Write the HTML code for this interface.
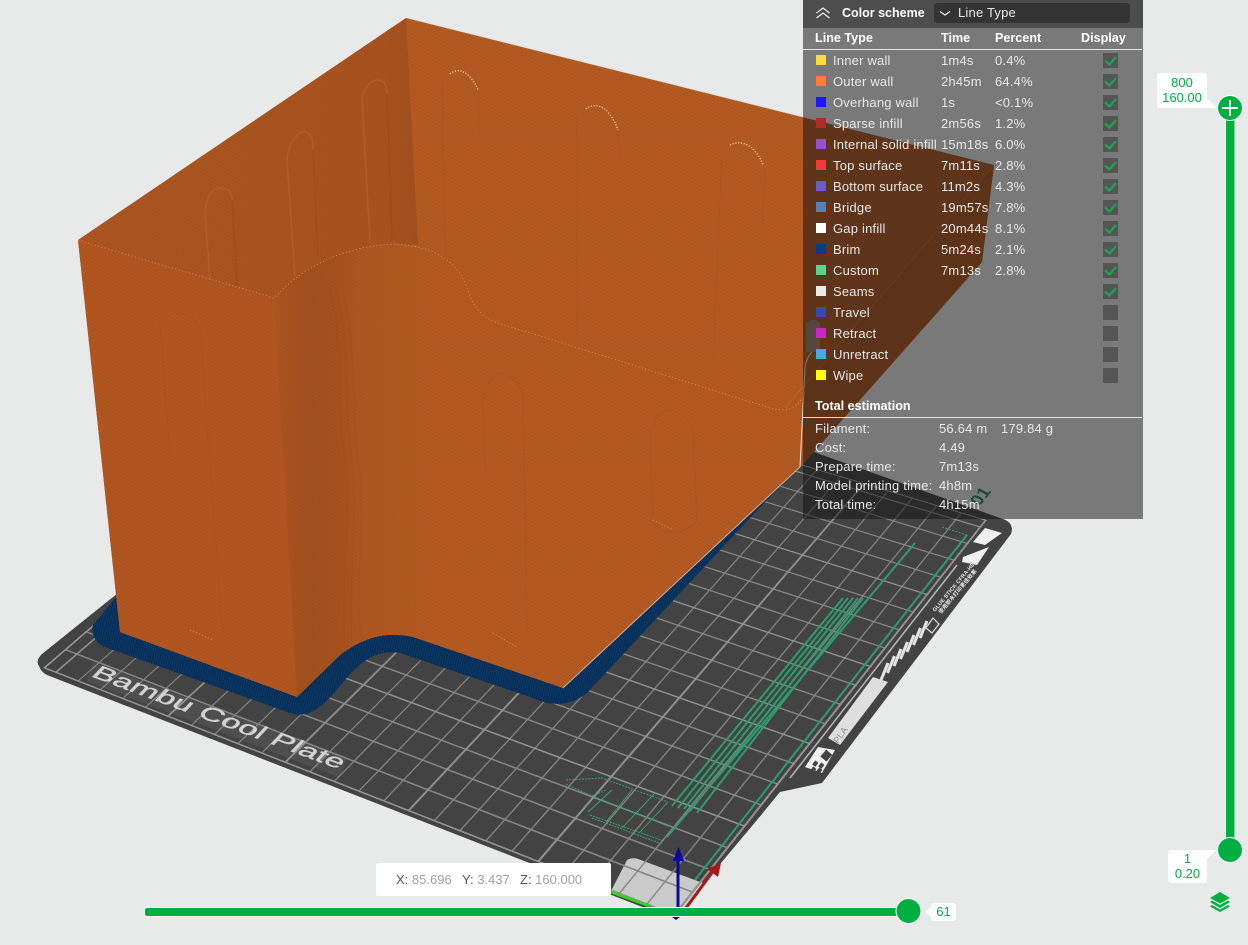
<!DOCTYPE html>
<html lang="en"><head><meta charset="utf-8"><title>Preview</title>
<style>
html,body{margin:0;padding:0}
body{width:1248px;height:945px;overflow:hidden;background:#e8e9e9;position:relative;font-family:"Liberation Sans","Noto Sans CJK SC",sans-serif;font-size:13px;letter-spacing:.2px}
svg.l{position:absolute;left:0;top:0}
#gridwrap{position:absolute;left:0;top:0;width:1248px;height:917px;overflow:hidden}
#grid{position:absolute;left:0;top:0;width:1024px;height:1024px;box-sizing:border-box;transform-origin:0 0;
transform:matrix3d(.48992,-.28913,0,.00018768,-.61155,-.15464,0,.00013106,0,0,1,0,675,916,0,1);
background-image:linear-gradient(#929292 3.500px,transparent 3.500px),linear-gradient(90deg,#929292 3.500px,transparent 3.500px),linear-gradient(#868686 2.500px,transparent 2.500px),linear-gradient(90deg,#868686 2.500px,transparent 2.500px);
background-size:200px 200px,200px 200px,50px 40px,50px 40px;border-right:3px solid #999;border-bottom:3px solid #999}
#panel{position:absolute;left:803px;top:0;width:340px;height:519px;background:rgba(20,20,20,.52);color:#e8e8e8}
#head{position:absolute;left:0;top:0;width:340px;height:28px;background:rgba(0,0,0,.36)}
#dd{position:absolute;left:131px;top:3px;width:196px;height:20px;background:#343434;border-radius:3px}
.a{position:absolute;white-space:nowrap;line-height:16px}
.b{font-weight:bold;color:#fff;letter-spacing:0;font-size:12.6px}
.hr{position:absolute;left:0;width:339px;height:1px;background:#e4e4e4}
.s{position:absolute;left:13px;width:10px;height:10px}
.c{position:absolute;left:300px;width:15px;height:15px;background:#555}
.c svg{position:absolute;left:0;top:0}
.bub{position:absolute;background:#fff;color:#00ae42;text-align:center;border-radius:3px;font-size:13px;line-height:15px;letter-spacing:0}
#xyz{position:absolute;left:376px;top:863px;width:235px;height:33px;background:#fff;border-radius:2px;color:#555}
#xyz span{position:absolute;top:9px;line-height:16px;letter-spacing:0}
#xyz i{font-style:normal;color:#a0a0a0}
</style></head><body>

<svg class="l" width="1248" height="945" viewBox="0 0 1248 945">
<path d="M39 666Q35 661 42 654L113 597L470 330L1000 518Q1015 522 1011 534L822 783L780 792L757 820L690 900L678 916L668 917L47 675Q41 672 39 666Z" fill="#424342"/>
<path d="M627 860Q632 857 638 859L703 883L680 916L610 893Z" fill="#cacaca"/>
</svg>

<div id="gridwrap"><div id="grid"></div></div>

<svg class="l" width="1248" height="945" viewBox="0 0 1248 945">
<defs>
<pattern id="br" width="2.4" height="6" patternUnits="userSpaceOnUse" patternTransform="rotate(12)"><rect width="2.4" height="6" fill="#0a3663"/><rect width=".8" height="6" fill="#06294f"/></pattern>
<pattern id="tex" width="3" height="3" patternUnits="userSpaceOnUse" patternTransform="rotate(30)"><rect width="3" height="1" fill="#000" opacity=".04"/></pattern>
<linearGradient id="curve" gradientUnits="userSpaceOnUse" x1="274" y1="0" x2="430" y2="0">
<stop offset="0" stop-color="#ad5520"/><stop offset=".2" stop-color="#a2501e"/><stop offset=".4" stop-color="#a5521e"/><stop offset=".6" stop-color="#b05720"/><stop offset="1" stop-color="#b35a22"/></linearGradient>
<linearGradient id="il" gradientUnits="userSpaceOnUse" x1="78" y1="0" x2="418" y2="0">
<stop offset="0" stop-color="#ab5520"/><stop offset=".9" stop-color="#a8531f"/><stop offset="1" stop-color="#a2501d"/></linearGradient>
</defs>

<!-- bed label and marks -->
<path d="M90 672L343 768" stroke="#fff" stroke-width="20" opacity=".06"/>
<text transform="matrix(1,.375,-.62,.66,90,676)" font-family="Liberation Sans" font-size="24" fill="#d2d2d2" stroke="#d2d2d2" stroke-width=".5" textLength="249" lengthAdjust="spacingAndGlyphs">Bambu Cool Plate</text>

<g fill="#f0f0f0">
<path d="M985 528L1002 533L985 545L973 542Z"/><path d="M963 557L989 547L977 565L962 562Z"/>
<path d="M873 677L888 682L840 745L828 738Z" fill="#dedede"/>
<path d="M805 767L822 773L835 750L818 747Z"/>
</g>
<path d="M957 565L790 778" stroke="#b8b8b8" stroke-width="1.5"/>
<g stroke="#e4e4e4" stroke-width="3">
<path d="M881 680L888 663M887.500 673L894.500 656M894 666L901 649M900.500 659L907.500 642M907 652L914 635M913.500 645L920.500 628M920 638L927 621"/>
</g>
<path d="M926 628L933 618L939 624L932 633Z" fill="none" stroke="#ddd" stroke-width="1.2"/>
<g fill="#eee" font-family="Liberation Sans,Noto Sans CJK SC,sans-serif" font-size="5.4" font-weight="bold">
<text transform="translate(935,612) rotate(-50)">GLUE STICK CFRA-HELP</text>
<text transform="translate(941,614) rotate(-50)">使用胶水打印更佳效果</text>
</g>
<text transform="translate(838,744) rotate(-55)" font-family="Liberation Sans" font-size="9" fill="#8a8a8a">PLA</text>
<g fill="#444"><rect x="813" y="762" width="5" height="4" transform="rotate(-50 815 764)"/><rect x="811" y="768" width="5" height="4" transform="rotate(-50 813 770)"/><rect x="819" y="764" width="5" height="4" transform="rotate(-50 821 766)"/><rect x="817" y="769" width="5" height="4" transform="rotate(-50 819 771)"/><rect x="822" y="752" width="9" height="8" transform="rotate(-50 826 756)"/></g>
<text transform="matrix(.6,-.75,.85,.45,979.500,506.500)" font-family="Liberation Sans" font-size="18" font-weight="bold" fill="#1f8a58">01</text>

<!-- custom lines -->
<g stroke="#2f9c6e" stroke-width="2" fill="none">
<path d="M843 598L672 806M848 598L678 808M853 598L684 809M858 598L690 811M863 598L697 813"/>
<path d="M915 543L667 837"/>
<path d="M967 535L695 880"/>
</g>
<g stroke="#3da87a" stroke-width=".9" fill="none">
<path d="M942 527L967 535" stroke-dasharray="2 1.5"/>
<path d="M566 780L602 778L668 802" stroke-dasharray="2 1.2"/>
<path d="M566 784L592 796L606 790" stroke-dasharray="2 1.2"/>
<path d="M590 815L664 841M592 818L662 844" stroke-dasharray="2 1"/>
<path d="M588 812L612 790M606 822L632 790M622 828L654 794M640 832L668 802"/>
<path d="M592 796L668 826"/>
</g>

<!-- brim -->
<path d="M118 595L93 625Q90 637 102 646L290 713Q305 718 318 708C330 700 340 685 352 672C368 656 382 650 400 653L533 698Q563 712 587 693L762 505L802 465L400 500Z" fill="url(#br)"/>

<!-- model -->
<path d="M406 18L994 165L982 262L805 462L800 467L563 688L413 637Q375 628 340 655L297 697L120 632L78 240Z" fill="#b35a22"/>
<path d="M994 165L982 262L805 462L800 467L802 398L785 408Z" fill="#b05820"/>
<path d="M78 240L406 18L418 245L395 244Q340 246 274 298Z" fill="url(#il)"/>
<path d="M78 240L274 298L297 697L120 632Z" fill="#b15620"/>
<path d="M274 298C300 270 340 246 395 244C430 246 455 258 466 285C472 305 480 316 495 322L770 408C785 412 796 410 802 398L800 467L563 688L413 637Q375 628 340 655L297 697Z" fill="url(#curve)"/>
<g fill="none" stroke="#8f4518" stroke-width="1" opacity=".18">
<path d="M330 290C345 350 335 400 345 460C352 520 340 590 345 640"/>
<path d="M336 290C352 350 342 400 352 460C358 520 348 590 352 640"/>
<path d="M344 300C358 350 350 420 360 470C365 530 355 590 360 630"/>
</g>
<path d="M406 18L994 165L982 262L805 462L800 467L563 688L413 637Q375 628 340 655L297 697L120 632L78 240Z" fill="url(#tex)"/>

<!-- slots -->
<g fill="none" stroke="#bd6a30" stroke-width="1.6" opacity=".42">
<path d="M210 280L205 213C206 198 212 188 220 188C229 188 232 192 232 200"/>
<path d="M295 277L287 160C288 145 296 132 305 132C311 132 313 140 313 150"/>
<path d="M370 240L362 100C363 90 370 80 377 80C384 80 387 85 387 93"/>
</g>
<g fill="none" stroke="#944718" stroke-width="1.3" opacity=".4">
<path d="M232 200L237 287M313 150L318 257M387 93L392 240"/>
</g>
<g fill="none" stroke="#a14e1c" stroke-width="1.1" opacity=".3">
<path d="M445 257L442 80M478 93L480 130"/>
<path d="M577 337L577 117M618 130L620 160"/>
<path d="M713 360L722 153M765 170L762 227"/>
<path d="M170 457L160 323C165 317 172 313 180 313C192 315 198 322 200 333L207 423L223 637"/>
<path d="M485 473L483 400C487 384 492 373 500 373C513 375 520 385 523 397L527 630"/>
<path d="M653 520L650 433C654 420 660 410 670 410C682 412 690 420 693 430L697 520C692 528 683 532 673 532C663 532 656 528 653 520Z"/>
</g>
<g fill="none" stroke="#e8c4a4" stroke-width="1.4" stroke-dasharray="1.2 1.6">
<path d="M450 74C456 69 462 70 468 75C472 79 476 84 478 90"/>
<path d="M586 109C592 104 600 105 606 110C611 115 615 122 618 130"/>
<path d="M730 145C738 141 746 143 752 148C757 153 761 159 763 165"/>
</g>
<g fill="none" stroke="#e89a5c" stroke-width="1" stroke-dasharray="1.2 2" opacity=".7">
<path d="M190 630L213 640M493 633L517 647M653 520L673 530"/>
</g>
<g fill="none" stroke="#efa468" stroke-width=".8" stroke-dasharray="1 2.5" opacity=".8">
<path d="M78 240L274 298C300 270 340 246 395 244C430 246 455 258 466 285C472 305 480 316 495 322L770 408C785 412 796 410 802 398"/>
</g>
<path d="M563 688L800 467" stroke="#e8cbb4" stroke-width="1" opacity=".8"/>
<path d="M994 165L785 408" stroke="#cf8a55" stroke-width=".7" opacity=".4"/>

<!-- extruder -->
<path d="M806 325Q806 321 812 320L816 320Q820 322 820 326L820 352L806 352Z" fill="#9b806d"/>
<path d="M812 352Q806 358 805 368L800 467" stroke="#e4e4e4" stroke-width="1" fill="none"/>

<!-- axes -->
<path d="M611 892L650 906" stroke="#35d21f" stroke-width="3"/>
<path d="M678 860V908" stroke="#0a0a96" stroke-width="3"/>
<path d="M678.500 847L684 861H673Z" fill="#0a0a96"/>
<path d="M686 908L714 870" stroke="#a71919" stroke-width="3"/>
<path d="M721 863L718 877L707 869Z" fill="#a71919"/>
<path d="M672 917L680 917L676 920Z" fill="#0a0a96"/>
</svg>

<div id="panel">
<div id="head"></div>
<svg style="position:absolute;left:12px;top:7px" width="16" height="12" viewBox="0 0 16 12" fill="none" stroke="#eee" stroke-width="1.2"><path d="M1.500 6L8 1L14.500 6M1.500 11L8 6L14.500 11"/></svg>
<div class="a b" style="left:39px;top:5px;font-size:12.5px">Color scheme</div>
<div id="dd"></div>
<svg style="position:absolute;left:136px;top:10px" width="12" height="7" viewBox="0 0 12 7" fill="none" stroke="#eee" stroke-width="1.2"><path d="M1 1.500L6 5L11 1.500"/></svg>
<div class="a" style="left:155px;top:5px">Line Type</div>

<div class="a b" style="left:12px;top:30px">Line Type</div>
<div class="a b" style="left:138px;top:30px">Time</div>
<div class="a b" style="left:192px;top:30px">Percent</div>
<div class="a b" style="left:278px;top:30px">Display</div>
<div class="hr" style="top:49px"></div>

<div class="s" style="top:55px;background:#fddc3f"></div><div class="a" style="left:30px;top:53px">Inner wall</div><div class="a" style="left:138px;top:53px">1m4s</div><div class="a" style="left:192px;top:53px">0.4%</div>
<div class="s" style="top:76px;background:#ff7d38"></div><div class="a" style="left:30px;top:74px">Outer wall</div><div class="a" style="left:138px;top:74px">2h45m</div><div class="a" style="left:192px;top:74px">64.4%</div>
<div class="s" style="top:97px;background:#1a1aff"></div><div class="a" style="left:30px;top:95px">Overhang wall</div><div class="a" style="left:138px;top:95px">1s</div><div class="a" style="left:192px;top:95px">&lt;0.1%</div>
<div class="s" style="top:118px;background:#b02a2a"></div><div class="a" style="left:30px;top:116px">Sparse infill</div><div class="a" style="left:138px;top:116px">2m56s</div><div class="a" style="left:192px;top:116px">1.2%</div>
<div class="s" style="top:139px;background:#9a4fd6"></div><div class="a" style="left:30px;top:137px">Internal solid infill</div><div class="a" style="left:138px;top:137px">15m18s</div><div class="a" style="left:192px;top:137px">6.0%</div>
<div class="s" style="top:160px;background:#f23c3c"></div><div class="a" style="left:30px;top:158px">Top surface</div><div class="a" style="left:138px;top:158px">7m11s</div><div class="a" style="left:192px;top:158px">2.8%</div>
<div class="s" style="top:181px;background:#6a5acd"></div><div class="a" style="left:30px;top:179px">Bottom surface</div><div class="a" style="left:138px;top:179px">11m2s</div><div class="a" style="left:192px;top:179px">4.3%</div>
<div class="s" style="top:202px;background:#4f82c8"></div><div class="a" style="left:30px;top:200px">Bridge</div><div class="a" style="left:138px;top:200px">19m57s</div><div class="a" style="left:192px;top:200px">7.8%</div>
<div class="s" style="top:223px;background:#fff"></div><div class="a" style="left:30px;top:221px">Gap infill</div><div class="a" style="left:138px;top:221px">20m44s</div><div class="a" style="left:192px;top:221px">8.1%</div>
<div class="s" style="top:244px;background:#003f7f"></div><div class="a" style="left:30px;top:242px">Brim</div><div class="a" style="left:138px;top:242px">5m24s</div><div class="a" style="left:192px;top:242px">2.1%</div>
<div class="s" style="top:265px;background:#5fd08e"></div><div class="a" style="left:30px;top:263px">Custom</div><div class="a" style="left:138px;top:263px">7m13s</div><div class="a" style="left:192px;top:263px">2.8%</div>
<div class="s" style="top:286px;background:#e8e8e8"></div><div class="a" style="left:30px;top:284px">Seams</div>
<div class="s" style="top:307px;background:#3a48b0"></div><div class="a" style="left:30px;top:305px">Travel</div>
<div class="s" style="top:328px;background:#cc22cc"></div><div class="a" style="left:30px;top:326px">Retract</div>
<div class="s" style="top:349px;background:#3fb0dc"></div><div class="a" style="left:30px;top:347px">Unretract</div>
<div class="s" style="top:370px;background:#ffff00"></div><div class="a" style="left:30px;top:368px">Wipe</div>

<div class="c" style="top:53px"><svg width="15" height="15" fill="none" stroke="#1aa64c" stroke-width="2.2"><path d="M2 7.500L6.500 11.500L13 4"/></svg></div>
<div class="c" style="top:74px"><svg width="15" height="15" fill="none" stroke="#1aa64c" stroke-width="2.2"><path d="M2 7.500L6.500 11.500L13 4"/></svg></div>
<div class="c" style="top:95px"><svg width="15" height="15" fill="none" stroke="#1aa64c" stroke-width="2.2"><path d="M2 7.500L6.500 11.500L13 4"/></svg></div>
<div class="c" style="top:116px"><svg width="15" height="15" fill="none" stroke="#1aa64c" stroke-width="2.2"><path d="M2 7.500L6.500 11.500L13 4"/></svg></div>
<div class="c" style="top:137px"><svg width="15" height="15" fill="none" stroke="#1aa64c" stroke-width="2.2"><path d="M2 7.500L6.500 11.500L13 4"/></svg></div>
<div class="c" style="top:158px"><svg width="15" height="15" fill="none" stroke="#1aa64c" stroke-width="2.2"><path d="M2 7.500L6.500 11.500L13 4"/></svg></div>
<div class="c" style="top:179px"><svg width="15" height="15" fill="none" stroke="#1aa64c" stroke-width="2.2"><path d="M2 7.500L6.500 11.500L13 4"/></svg></div>
<div class="c" style="top:200px"><svg width="15" height="15" fill="none" stroke="#1aa64c" stroke-width="2.2"><path d="M2 7.500L6.500 11.500L13 4"/></svg></div>
<div class="c" style="top:221px"><svg width="15" height="15" fill="none" stroke="#1aa64c" stroke-width="2.2"><path d="M2 7.500L6.500 11.500L13 4"/></svg></div>
<div class="c" style="top:242px"><svg width="15" height="15" fill="none" stroke="#1aa64c" stroke-width="2.2"><path d="M2 7.500L6.500 11.500L13 4"/></svg></div>
<div class="c" style="top:263px"><svg width="15" height="15" fill="none" stroke="#1aa64c" stroke-width="2.2"><path d="M2 7.500L6.500 11.500L13 4"/></svg></div>
<div class="c" style="top:284px"><svg width="15" height="15" fill="none" stroke="#1aa64c" stroke-width="2.2"><path d="M2 7.500L6.500 11.500L13 4"/></svg></div>
<div class="c" style="top:305px"></div>
<div class="c" style="top:326px"></div>
<div class="c" style="top:347px"></div>
<div class="c" style="top:368px"></div>

<div class="a b" style="left:12px;top:398px">Total estimation</div>
<div class="hr" style="top:417px"></div>
<div class="a" style="left:12px;top:421px">Filament:</div><div class="a" style="left:136px;top:421px">56.64 m</div><div class="a" style="left:198px;top:421px">179.84 g</div>
<div class="a" style="left:12px;top:440px">Cost:</div><div class="a" style="left:136px;top:440px">4.49</div>
<div class="a" style="left:12px;top:459px">Prepare time:</div><div class="a" style="left:136px;top:459px">7m13s</div>
<div class="a" style="left:12px;top:478px">Model printing time:</div><div class="a" style="left:136px;top:478px">4h8m</div>
<div class="a" style="left:12px;top:497px">Total time:</div><div class="a" style="left:136px;top:497px">4h15m</div>
</div>

<div id="xyz">
<span style="left:20px">X: <i>85.696</i></span>
<span style="left:86px">Y: <i>3.437</i></span>
<span style="left:144px">Z: <i>160.000</i></span>
</div>

<svg class="l" width="1248" height="945" viewBox="0 0 1248 945">
<rect x="144" y="907" width="760" height="10" fill="#fff"/>
<rect x="145" y="908" width="760" height="8" rx="2" fill="#00ae42"/>
<circle cx="908.500" cy="911" r="13" fill="#fff"/><circle cx="908.500" cy="911" r="12" fill="#00ae42"/>
<path d="M931 907L925 912L931 917Z" fill="#fff"/>

<rect x="1225" y="108" width="10" height="742" fill="#fff"/>
<rect x="1226" y="108" width="8.500" height="742" fill="#00ae42"/>
<circle cx="1230" cy="108" r="13" fill="#fff"/><circle cx="1230" cy="108" r="12" fill="#00ae42"/>
<path d="M1222 108H1238M1230 100V116" stroke="#fff" stroke-width="2"/>
<circle cx="1230" cy="850" r="13" fill="#fff"/><circle cx="1230" cy="850" r="12" fill="#00ae42"/>
<path d="M1205 97L1218 108H1205Z" fill="#fff"/>
<path d="M1205 850H1216L1205 861Z" fill="#fff"/>
<g fill="#00ae42">
<path d="M1220 892L1230 898L1220 903.500L1210 898Z"/>
<path d="M1212 900.500L1220 905L1228 900.500L1230 902L1220 908L1210 902Z"/>
<path d="M1212 905L1220 909.500L1228 905L1230 906.500L1220 912L1210 906.500Z"/>
</g>
</svg>

<div class="bub" style="left:1157px;top:73px;width:50px;height:35px;padding-top:2px;box-sizing:border-box">800<br>160.00</div>
<div class="bub" style="left:1168px;top:850px;width:39px;height:33px;padding-top:1px;box-sizing:border-box">1<br>0.20</div>
<div class="bub" style="left:931px;top:903px;width:25px;height:18px;line-height:18px">61</div>
</body></html>
